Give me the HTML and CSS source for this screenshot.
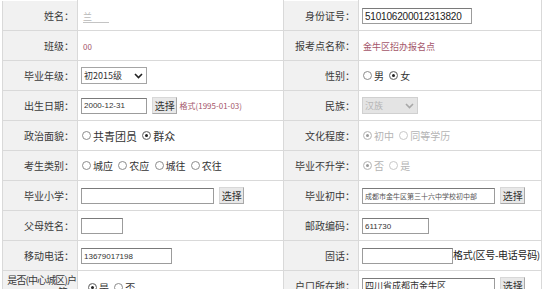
FILE: index.html
```html
<!DOCTYPE html>
<html lang="zh-CN">
<head>
  <meta charset="UTF-8">
  <title>考生信息</title>
  <link rel="stylesheet" href="styles.css">
</head>
<body>

  <div class="sheet">
    <table class="form">
      <colgroup>
        <col class="c-label">
        <col class="c-left">
        <col class="c-label">
        <col class="c-right">
      </colgroup>
      <tr>
        <td class="label">姓名：</td>
        <td><span class="name">兰</span></td>
        <td class="label">身份证号：</td>
        <td><input type="text" class="txt id-no" value="510106200012313820"></td>
      </tr>
      <tr>
        <td class="label">班级：</td>
        <td><span class="info small">00</span></td>
        <td class="label">报考点名称：</td>
        <td><span class="info">金牛区招办报名点</span></td>
      </tr>
      <tr>
        <td class="label">毕业年级：</td>
        <td>
          <span class="pick w-grade">
            <select><option>初2015级</option></select>
            <svg class="caret" width="9" height="6" viewBox="0 0 9 6"><path d="M1 1 L4.5 4.5 L8 1" fill="none" stroke="#222" stroke-width="1.6"/></svg>
          </span>
        </td>
        <td class="label">性别：</td>
        <td>
          <label class="opt"><input type="radio" name="sex">男</label>
          <label class="opt"><input type="radio" name="sex" checked>女</label>
        </td>
      </tr>
      <tr>
        <td class="label">出生日期：</td>
        <td>
          <input type="text" class="txt w-date" value="2000-12-31">
          <button class="btn">选择</button>
          <span class="info hint">格式(1995-01-03)</span>
        </td>
        <td class="label">民族：</td>
        <td>
          <span class="pick w-nation off">
            <select disabled><option>汉族</option></select>
            <svg class="caret" width="9" height="6" viewBox="0 0 9 6"><path d="M1 1 L4.5 4.5 L8 1" fill="none" stroke="#a8a8a8" stroke-width="1.6"/></svg>
          </span>
        </td>
      </tr>
      <tr>
        <td class="label">政治面貌：</td>
        <td>
          <label class="opt wide"><input type="radio" name="party">共青团员</label>
          <label class="opt wide"><input type="radio" name="party" checked>群众</label>
        </td>
        <td class="label">文化程度：</td>
        <td>
          <label class="opt off"><input type="radio" name="edu" checked disabled>初中</label>
          <label class="opt off"><input type="radio" name="edu" disabled>同等学历</label>
        </td>
      </tr>
      <tr>
        <td class="label">考生类别：</td>
        <td>
          <label class="opt"><input type="radio" name="kind">城应</label>
          <label class="opt"><input type="radio" name="kind">农应</label>
          <label class="opt"><input type="radio" name="kind">城往</label>
          <label class="opt"><input type="radio" name="kind">农往</label>
        </td>
        <td class="label">毕业不升学：</td>
        <td>
          <label class="opt off"><input type="radio" name="stop" checked disabled>否</label>
          <label class="opt off"><input type="radio" name="stop" disabled>是</label>
        </td>
      </tr>
      <tr>
        <td class="label">毕业小学：</td>
        <td>
          <input type="text" class="txt w-school">
          <button class="btn">选择</button>
        </td>
        <td class="label">毕业初中：</td>
        <td>
          <input type="text" class="txt w-school blur" value="成都市金牛区第三十六中学校初中部">
          <button class="btn">选择</button>
        </td>
      </tr>
      <tr>
        <td class="label">父母姓名：</td>
        <td><input type="text" class="txt w-parent"></td>
        <td class="label">邮政编码：</td>
        <td><input type="text" class="txt w-zip" value="611730"></td>
      </tr>
      <tr>
        <td class="label">移动电话：</td>
        <td><input type="text" class="txt w-phone" value="13679017198"></td>
        <td class="label">固话：</td>
        <td>
          <input type="text" class="txt w-phone"><span class="note">格式(区号-电话号码)</span>
        </td>
      </tr>
      <tr>
        <td class="label two-line">是否(中心城区)户籍：</td>
        <td>
          <span class="indent">
            <label class="opt"><input type="radio" name="city" checked>是</label>
            <label class="opt"><input type="radio" name="city">否</label>
          </span>
        </td>
        <td class="label">户口所在地：</td>
        <td>
          <input type="text" class="txt w-school cn" value="四川省成都市金牛区">
          <button class="btn">选择</button>
        </td>
      </tr>
    </table>
  </div>

</body>
</html>
```

FILE: styles.css
```css
body {
  margin: 0;
  background: #fff;
  font-family: "Noto Sans CJK SC", sans-serif;
  color: #333;
}
.sheet {
  height: 289px;
  overflow: hidden;
  padding-left: 2px;
}
.form {
  border-collapse: collapse;
  table-layout: fixed;
  width: 540px;
}
.c-label {
  width: 75px;
}
.c-left {
  width: 206px;
}
.c-right {
  width: 183px;
}
.form td {
  border: 1px solid #d9d9d9;
  height: 29px;
  padding: 0 0 0 3px;
  font-size: 10px;
  white-space: nowrap;
}
.form tr:first-child td {
  border-top-color: #fff;
}
.form .label {
  background: #f1f1f1;
  text-align: right;
  padding: 0 3px 0 0;
  color: #3a3a3a;
}
.form .two-line {
  white-space: normal;
  word-break: break-all;
  line-height: 12px;
  padding: 0 1px 0 0;
  letter-spacing: -0.9px;
}
.name {
  display: inline-block;
  width: 26px;
  color: #b8b8b8;
  font-size: 9px;
  border-bottom: 1px solid #c4c4c4;
  line-height: 10px;
  margin-left: 2px;
}
.info {
  color: #a4566a;
  font-size: 9px;
  margin-left: 1px;
}
.info.small {
  font-size: 8px;
  margin-left: 2px;
}
.hint {
  font-size: 8px;
  margin-left: 0;
}
.note {
  font-size: 10px;
  color: #222;
  letter-spacing: -0.3px;
}
.txt {
  box-sizing: border-box;
  height: 16px;
  border: 1px solid #9c9c9c;
  border-top-color: #7a7a7a;
  padding: 0 2px;
  margin: 0;
  font-family: "Liberation Sans", sans-serif;
  font-size: 8px;
  color: #333;
  vertical-align: middle;
  background: #fff;
}
.id-no {
  width: 110px;
  font-size: 10px;
  color: #222;
  letter-spacing: -0.2px;
}
.w-date {
  width: 66px;
}
.w-school {
  width: 133px;
}
.w-parent {
  width: 42px;
}
.w-zip {
  width: 67px;
}
.w-phone {
  width: 91px;
}
.blur {
  font-family: "Noto Sans CJK SC", sans-serif;
  font-size: 7px;
  color: #555;
}
.cn {
  font-family: "Noto Sans CJK SC", sans-serif;
  font-size: 9px;
}
.btn {
  box-sizing: border-box;
  width: 25px;
  height: 17px;
  padding: 0;
  margin: 0 0 0 3px;
  border: 1px solid #a8a8a8;
  border-top-color: #d8d8d8;
  border-left-color: #d8d8d8;
  background: #e8e8e8;
  font-family: "Noto Sans CJK SC", sans-serif;
  font-size: 10px;
  color: #333;
  vertical-align: middle;
}
.pick {
  position: relative;
  display: inline-block;
  vertical-align: middle;
}
.pick select {
  appearance: none;
  box-sizing: border-box;
  width: 100%;
  height: 17px;
  margin: 0;
  padding: 0 0 0 2px;
  border: 1px solid #a5a5a5;
  background: #fff;
  font-family: "Noto Sans CJK SC", sans-serif;
  font-size: 9px;
  color: #333;
}
.pick .caret {
  position: absolute;
  right: 4px;
  top: 6px;
}
.w-grade {
  width: 66px;
}
.w-nation {
  width: 56px;
}
.pick.off select {
  background: #e4e4e4;
  border-color: #d0d0d0;
  color: #b5b5b5;
  opacity: 1;
}
.opt {
  display: inline-flex;
  align-items: center;
  margin-right: 2px;
  font-size: 10px;
  color: #333;
}
.opt.wide {
  font-size: 11px;
}
.opt.off {
  color: #b4b4b4;
}
.opt input {
  appearance: none;
  box-sizing: border-box;
  width: 9px;
  height: 9px;
  margin: 0 2px 0 1px;
  border: 1px solid #8c8c8c;
  border-radius: 50%;
  background: #fff;
}
.opt input:checked {
  background: #222;
  box-shadow: inset 0 0 0 2px #fff;
}
.opt.off input {
  border-color: #c8c8c8;
}
.opt.off input:checked {
  background: #999;
}
.indent {
  display: inline-block;
  padding: 3px 0 0 6px;
}
```
